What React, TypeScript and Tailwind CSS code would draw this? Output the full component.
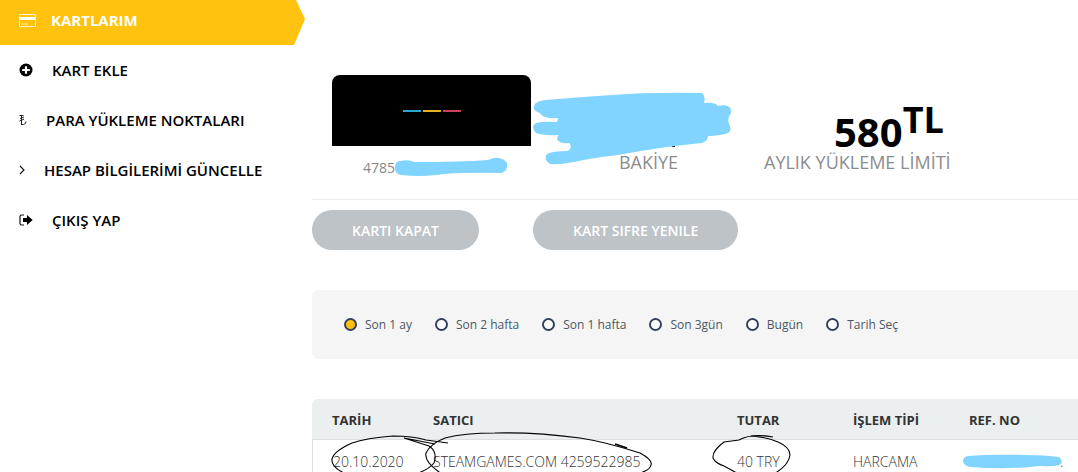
import type { ReactNode } from 'react'

const menu: { label: string; icon: ReactNode }[] = [
  {
    label: 'KART EKLE',
    icon: (
      <svg width="14" height="14" viewBox="0 0 14 14" aria-hidden="true">
        <circle cx="7" cy="7" r="6.5" fill="#000" />
        <path d="M7 3.2v7.6M3.2 7h7.6" stroke="#fff" strokeWidth="2.2" />
      </svg>
    ),
  },
  {
    label: 'PARA YÜKLEME NOKTALARI',
    icon: (
      <svg width="8" height="12" viewBox="0 0 8 12" fill="none" stroke="#222" aria-hidden="true">
        <path d="M2.5 1v10M2.5 10.5h2q2.5-.5 2.5-3" />
        <path d="M.5 1.5h4M1 4.6l4-1.6M.5 7l4.5-1.8" />
      </svg>
    ),
  },
  {
    label: 'HESAP BİLGİLERİMİ GÜNCELLE',
    icon: (
      <svg width="6" height="10" viewBox="0 0 6 10" fill="none" stroke="#111" aria-hidden="true">
        <path d="M1 1l4 4-4 4" strokeWidth="1.1" />
      </svg>
    ),
  },
  {
    label: 'ÇIKIŞ YAP',
    icon: (
      <svg width="14" height="12" viewBox="0 0 14 12" aria-hidden="true">
        <path d="M5 1H2.5Q1 1 1 2.5v7Q1 11 2.5 11H5" fill="none" stroke="#111" strokeWidth="1.2" />
        <path d="M4 4h4V1l5.7 5L8 11V8H4z" fill="#000" />
      </svg>
    ),
  },
]

const periods = ['Son 1 ay', 'Son 2 hafta', 'Son 1 hafta', 'Son 3gün', 'Bugün', 'Tarih Seç']

function Sidebar() {
  return (
    <nav className="w-[305px] shrink-0 text-[15px] font-semibold text-black">
      <a
        href="#kartlarim"
        className="flex h-[45px] items-center gap-[15px] bg-[#ffc20e] pb-1 pl-[19px] font-bold text-white [clip-path:polygon(0_0,296px_0,305px_19px,294px_100%,0_100%)]"
      >
        <svg width="17" height="13" viewBox="0 0 17 13" aria-hidden="true">
          <rect x=".5" y=".5" width="16" height="12" rx=".5" fill="none" stroke="#fff3cc" />
          <path d="M1 4.5h15" stroke="#fff" strokeWidth="3" />
          <path d="M2.5 10h2M5.5 10h3.5" stroke="#fff3cc" />
        </svg>
        KARTLARIM
      </a>
      {menu.map((item) => (
        <a key={item.label} href="#menu" className="flex h-[50px] items-center gap-[19px] pl-[19px]">
          {item.icon}
          {item.label}
        </a>
      ))}
    </nav>
  )
}

function Summary() {
  return (
    <section className="grid h-[125px] grid-cols-[221px_231px_1fr] border-b border-[#ebebeb]">
      <div className="relative pl-5">
        <div className="flex h-[71px] w-[199px] items-center justify-center gap-0.5 rounded-t-lg bg-black">
          <span className="h-0.5 w-[18px] bg-[#2fa4cf]" />
          <span className="h-0.5 w-[18px] bg-[#e3b423]" />
          <span className="h-0.5 w-[18px] bg-[#c9405a]" />
        </div>
        <p className="mt-3 pl-[31px] text-[14px] leading-5 text-[#888]">4785</p>
        <svg className="absolute top-[82px] left-[82px]" width="116" height="20" viewBox="394 157 116 20" aria-hidden="true">
          <path
            d="M395 168q0-7 5-7q9-2 14 1q46 0 74-2q8-4 14-1q6 2 5 8q-1 6-8 6q-44-1-63 2q-18 2-35 0q-6-1-6-7z"
            fill="#80d4ff"
          />
        </svg>
      </div>
      <div className="relative flex flex-col items-center">
        <p className="mt-[76px] text-[18px] leading-[22px] text-[#8c8c8c]">BAKİYE</p>
        <svg className="absolute top-[17px] left-0" width="200" height="74" viewBox="533 92 200 74" aria-hidden="true">
          <path d="M672 145h3v2h-3z" fill="#000" />
          <path
            d="M546 100Q580 97 612 95Q650 92 702 93Q706 96 704 103Q715 102 718 106Q732 103 731 113Q726 119 730 126Q732 133 725 134Q715 136 708 136Q708 141 702 143Q660 147 618 155Q592 158 574 162Q557 165 550 164Q543 159 547 154Q552 151 568 151Q573 147 569 143Q559 144 557 139Q557 136 559 135Q545 136 536 133Q530 126 536 123Q544 121 557 122L558 118Q542 119 540 113Q533 111 534 106Q535 101 546 100z"
            fill="#80d4ff"
          />
        </svg>
      </div>
      <div className="flex w-max flex-col">
        <p className="flex h-[76px] items-start pl-[70px] text-[40px] leading-[38px] font-bold text-black">
          <span className="pt-[38px]">580</span>
          <sup className="top-0 pt-[26px] text-[36px] leading-[38px]">TL</sup>
        </p>
        <p className="text-[18px] leading-[22px] text-[#8c8c8c]">AYLIK YÜKLEME LİMİTİ</p>
      </div>
    </section>
  )
}

function Filters() {
  return (
    <fieldset className="mt-10 flex h-[69px] items-center gap-[23px] overflow-hidden rounded-l-md bg-[#f5f5f5] pl-8 text-[12px] whitespace-nowrap text-[#4a5866]">
      {periods.map((period, i) => (
        <label key={period} className="flex items-center gap-2">
          <input
            type="radio"
            name="period"
            defaultChecked={i === 0}
            className="size-[13px] appearance-none rounded-full border-2 border-[#34425a] bg-white checked:bg-[#ffc20e]"
          />
          {period}
        </label>
      ))}
    </fieldset>
  )
}

function Transactions() {
  return (
    <section className="relative mt-10">
      <table className="w-full table-fixed border-separate border-spacing-0 text-left whitespace-nowrap text-[#333]">
        <thead className="text-[13px]">
          <tr className="h-[41px] [&>th]:border-b [&>th]:border-[#dde0e0] [&>th]:bg-[#ebefef] [&>th]:pt-1 [&>th]:font-bold">
            <th className="w-[121px] rounded-tl-md pl-5">TARİH</th>
            <th className="w-[304px]">SATICI</th>
            <th className="w-[116px]">TUTAR</th>
            <th className="w-[116px]">İŞLEM TİPİ</th>
            <th>REF. NO</th>
          </tr>
        </thead>
        <tbody className="text-[14px] font-light">
          <tr className="h-[42px]">
            <td className="border-l border-[#dde0e0] pl-5">20.10.2020</td>
            <td>STEAMGAMES.COM 4259522985</td>
            <td>40 TRY</td>
            <td>HARCAMA</td>
            <td className="pl-[91px]">.</td>
          </tr>
        </tbody>
      </table>
      {/* hand-drawn marks over the first row */}
      <svg
        className="pointer-events-none absolute top-0 left-0"
        width="766"
        height="84"
        viewBox="312 399 766 84"
        fill="none"
        stroke="#000"
        strokeWidth="1.1"
        aria-hidden="true"
      >
        <path d="M448 443L426 440Q413 436 393 436Q366 438 352 443Q334 451 332 459Q331 466 342 472Q362 482 395 479Q425 474 434 463Q438 452 429 446L404 438L435 444" />
        <path d="M439 472Q424 461 426 453Q430 444 445 438Q464 433 495 433Q535 432 580 438Q606 442 640 453Q653 460 651 465Q650 470 640 473Q560 486 450 479z" />
        <path d="M615 444l12 4" strokeWidth="1.6" />
        <path d="M773 437Q752 433 739 440L724 442Q712 451 713 458Q715 463 724 466L735 472Q756 480 777 472Q789 464 790 455Q790 447 778 442Q767 437 751 436" />
        <path
          d="M968 456Q990 454 1025 455Q1046 455 1059 457Q1063 460 1061 464Q1056 467 1040 466Q1005 470 970 467Q963 465 963 461Q963 457 968 456z"
          fill="#80d4ff"
          stroke="none"
        />
      </svg>
    </section>
  )
}

export default function App() {
  return (
    <div className="flex h-screen gap-[7px] overflow-hidden bg-white font-['Open_Sans',sans-serif]">
      <Sidebar />
      <main className="min-w-0 flex-1 pt-[75px]">
        <Summary />
        <div className="mt-2.5 grid grid-cols-[221px_1fr] justify-items-start text-[14px] font-semibold text-white">
          <button type="button" className="h-10 rounded-full bg-[#bdc3c7] px-10">
            KARTI KAPAT
          </button>
          <button type="button" className="h-10 rounded-full bg-[#bdc3c7] px-10">
            KART SIFRE YENILE
          </button>
        </div>
        <Filters />
        <Transactions />
      </main>
    </div>
  )
}
